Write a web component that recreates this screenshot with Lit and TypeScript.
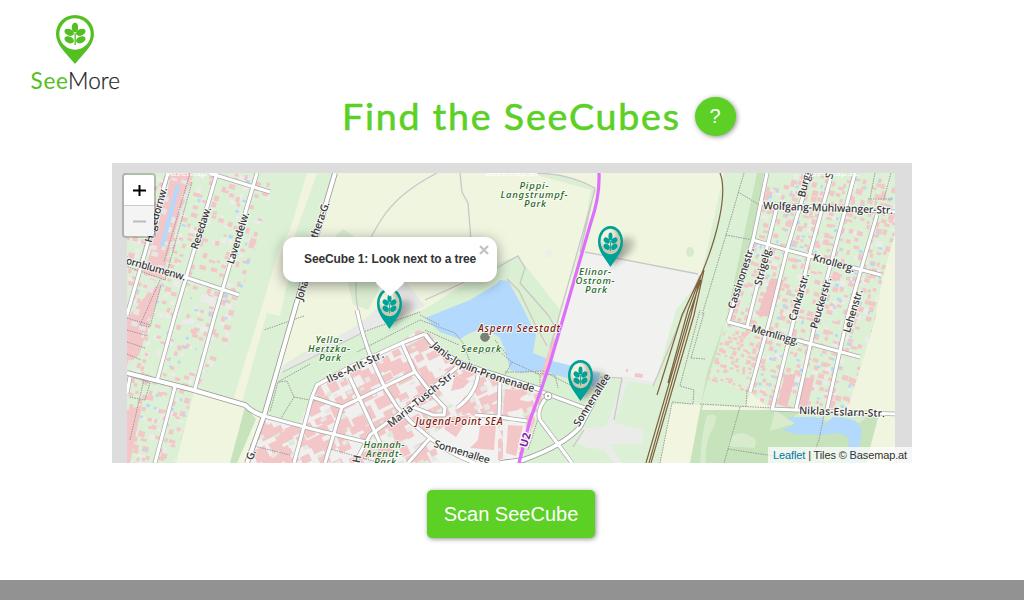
import { LitElement, html, svg, css } from "lit";
import { customElement } from "lit/decorators.js";

const PIN = "M19 0C8 0 0 8.300 0 19C0 30 10 38 19 49C28 38 38 30 38 19C38 8.300 30 0 19 0Z";

const leaves = (color: string) => svg`
  <g fill=${color}>
    <ellipse cx="19" cy="12.500" rx="3.100" ry="4.800"/>
    <ellipse cx="13.200" cy="17.300" rx="5" ry="3.300" transform="rotate(24 13.200 17.300)"/>
    <ellipse cx="24.800" cy="17.300" rx="5" ry="3.300" transform="rotate(-24 24.800 17.300)"/>
    <ellipse cx="13.200" cy="24.800" rx="5" ry="3.300" transform="rotate(24 13.200 24.800)"/>
    <ellipse cx="24.800" cy="24.800" rx="5" ry="3.300" transform="rotate(-24 24.800 24.800)"/>
    <rect x="18.500" y="18" width="1.300" height="12"/>
  </g>`;

/* Small deterministic generator so that the building pattern is stable. */
function random(seed: number) {
  let s = seed;
  return () => {
    s = (s * 1664525 + 1013904223) % 4294967296;
    return s / 4294967296;
  };
}

function scatter(seed: number, box: number[], angle: number, step: number, size: number, density: number) {
  const r = random(seed);
  const [x0, y0, x1, y1] = box;
  const a = (angle * Math.PI) / 180;
  const c = Math.cos(a), s = Math.sin(a);
  const cx = (x0 + x1) / 2, cy = (y0 + y1) / 2;
  const reach = Math.hypot(x1 - x0, y1 - y0) / 2;
  let d = "";
  for (let u = -reach; u < reach; u += step) {
    for (let v = -reach; v < reach; v += step) {
      const keep = r() < density;
      const uu = u + (r() - 0.5) * step * 0.7, vv = v + (r() - 0.5) * step * 0.7;
      const w = size * (0.6 + r() * 0.8), h = size * (0.5 + r() * 0.7);
      const x = cx + uu * c - vv * s, y = cy + uu * s + vv * c;
      if (!keep || x < x0 || x > x1 || y < y0 || y > y1) continue;
      d += `M${x.toFixed(1)} ${y.toFixed(1)}l${(w * c).toFixed(1)} ${(w * s).toFixed(1)} ${(-h * s).toFixed(1)} ${(h * c).toFixed(1)} ${(-w * c).toFixed(1)} ${(-w * s).toFixed(1)}z`;
    }
  }
  return d;
}

const WEST = "127,173 272,173 271,193 256,250 239,297 226,347 194,392 186,420 175,463 127,463 127,173";
const EAST = "768,173 895,173 895,233 882,280 875,320 848,408 771,409 750,393 708,380 728,322 753,240";
const CITY = "263,418 312,430 300,422 317,384 358,370 418,330 430,334 457,366 545,392 520,463 250,463";

const ROADS = [
  "M168 173L127 315", "M217 173L175 315 157 381", "M175 387L155 463", "M257 173L215 315 194 392",
  "M209 173L270 192", "M127 260L185 277 239 295", "M130 377L127 393",
  "M357 310Q362 335 372 360L385 388 397 407 412 423 430 438Q450 454 475 463",
  "M425 334L402 343 350 367 317 385 312 397 294 463", "M312 397L342 407 325 463", "M342 407L415 372 402 343",
  "M415 372L432 394 445 408 444 415 433 415 413 407", "M457 367L421 398 370 435 355 463", "M350 378L380 443",
  "M264 416L312 429 370 443", "M430 438L408 463", "M457 408Q476 394 478 375", "M500 380L499 417 475 415",
  "M499 417L527 421", "M542 392L585 408", "M547 397Q536 410 540 420L572 463",
  "M767 173L753 240 728 322", "M778 203L768 243 747 327", "M810 173L787 250 771 315 750 392",
  "M832 173L810 253 795 315 772 410", "M855 173L830 267 817 315 796 409", "M877 215L860 273 848 315 827 409",
  "M759 203L895 212", "M753 240L787 250 881 275", "M728 322L800 341 860 357", "M771 409L820 411 895 414",
];
const MAIN = [
  "M335 173L296 305 264 416 247 463", "M127 373L190 389 245 405Q253 413 264 416",
  "M425 334Q435 351 465 365L542 390", "M607 375L580 427Q563 446 523 460L500 463",
];
const PATHS = [
  "M166 173L140 262", "M190 173L164 262", "M192 182L165 280 120 264", "M160 280L140 325 150 327 161 285",
  "M127 318L150 325M127 330L148 336M127 342L145 348M127 354L141 360", "M145 375L130 440M133 377L150 383 145 400 129 397",
  "M304 316L264 330M310 364L278 382 270 412M279 382L287 381 294 397 280 420M294 397L315 401",
  "M360 333L420 312M357 352L420 320 455 333 463 343 470 362", "M420 315L440 325M425 330L459 345M462 345Q470 355 500 352",
  "M500 352L512 362 502 380M512 362L540 375 540 390M505 372L523 372 543 371 570 385 590 388",
  "M495 340L507 355M535 373L555 375 558 388", "M545 397L528 450M535 405L520 455",
  "M744 173L726 235 702 315M738 192L758 204M726 235L753 240",
  "M704 313L691 358M691 358L705 359M672 402L693 404 694 390 680 386 700 310M672 403L660 463",
  "M700 404L772 408M747 390L746 407M740 407L724 463M728 449L800 460M824 415L819 440 810 463",
  "M870 199L875 173M884 199L891 173M868 199L893 199", "M327 448L380 463M250 445L290 455",
];

type Label = [string, number, number, number, number];
const STREETS: Label[] = [
  ["Hagedornw.", 156, 215, -74, 57], ["Resedaw.", 201, 228, -72, 44], ["Lavendelw.", 238, 238, -73, 54],
  ["Kornblumenw.", 153, 268, 16, 68], ["Johan", 303, 287, -72, 27], ["thera-G.", 320, 220, -70, 38], ["G.", 251, 455, -72, 10],
  ["Ilse-Arlt-Str.", 355, 367, -25, 62], ["Maria-Tusch-Str.", 421, 399, -39, 83], ["Sonnenallee", 462, 452, 17, 58],
  ["Sonnenallee", 592, 400, -58, 60], ["Wolfgang-Mühlwanger-Str.", 828, 208, 2, 130], ["Knollerg.", 834, 263, 16, 43],
  ["Cassinonestr.", 741, 278, -72, 64], ["Strigelg.", 763, 266, -75, 40], ["Burgg.", 805, 182, -76, 31], ["Str.", 831, 170, -75, 18],
  ["Cankarstr.", 799, 297, -74, 49], ["Peuckerstr.", 821, 303, -74, 53], ["Lehenstr.", 853, 311, -73, 45],
  ["Memlingg.", 775, 335, 16, 49], ["Niklas-Eslarn-Str.", 842, 412, 2, 86], ["H", 357, 459, -78, 7],
];
const PARKS: Label[] = [
  ["Pippi-", 534, 185, 0, 29], ["Langstrumpf-", 534, 194, 0, 67], ["Park", 535, 203, 0, 22],
  ["Elinor-", 595, 271, 0, 32], ["Ostrom-", 595, 280, 0, 39], ["Park", 596, 289, 0, 22],
  ["Yella-", 329, 339, 0, 27], ["Hertzka-", 329, 348, 0, 42], ["Park", 330, 357, 0, 22],
  ["Hannah-", 384, 444, 0, 41], ["Arendt-", 384, 453, 0, 36], ["Park", 385, 461, 0, 22], ["Seepark", 481, 348, 0, 40],
];
const PLACES: Label[] = [["Aspern Seestadt", 519, 328, 0, 82], ["Jugend-Point SEA", 459, 421, 0, 87]];

const label = (cls: string) => ([text, x, y, angle, length]: Label) => svg`
  <text class=${cls} text-anchor="middle" dy="3.500" textLength=${length}
    transform="translate(${x} ${y}) rotate(${angle})">${text}</text>`;

@customElement("map-marker")
export class MapMarker extends LitElement {
  static styles = css`
    :host { display: block; width: 25px; height: 41px; }
    svg { display: block; overflow: visible; }
  `;
  render() {
    return html`<svg width="25" height="41" viewBox="0 0 38 49" preserveAspectRatio="none">
      <defs>
        <filter id="soft" x="-50%" y="-50%" width="200%" height="200%"><feGaussianBlur stdDeviation="3.500"/></filter>
        <linearGradient id="fade" x1="0" x2="1"><stop offset="0" stop-color="#333" stop-opacity=".6"/><stop offset="1" stop-color="#333" stop-opacity=".12"/></linearGradient>
        <radialGradient id="face" cx=".35" cy=".3"><stop offset=".5" stop-color="#f3f3df"/><stop offset="1" stop-color="#c9c8b3"/></radialGradient>
      </defs>
      <path d="M20 47L28 21Q42 9 58 17Q60 28 40 37Z" fill="url(#fade)" filter="url(#soft)"/>
      <path d=${PIN} fill="#00a197"/>
      <circle cx="19" cy="18.500" r="15.300" fill="url(#face)"/>
      ${leaves("#00a197")}
    </svg>`;
  }
}

@customElement("base-map")
export class BaseMap extends LitElement {
  static styles = css`
    :host { display: block; }
    svg { display: block; }
    .case { fill: none; stroke: #aaa; stroke-width: 4.600; }
    .road { fill: none; stroke: #fff; stroke-width: 3.200; }
    .case-main { fill: none; stroke: #999; stroke-width: 5.600; }
    .road-main { fill: none; stroke: #fff; stroke-width: 4; }
    .path { fill: none; stroke: #999; stroke-width: 1; stroke-dasharray: 1.500 1; }
    .track { fill: none; stroke: #c8c8c8; stroke-width: 1.300; }
    .rail { fill: none; stroke: #80603f; stroke-width: 1.200; }
    text { paint-order: stroke; stroke-linejoin: round; font-family: "Noto Sans", "Open Sans", sans-serif; }
    .street { font-family: "Open Sans", "Noto Sans", sans-serif; font-stretch: 90%; font-size: 10.500px; font-weight: 600; fill: #3b3b3b; stroke: #fff; stroke-opacity: .75; stroke-width: 2px; }
    .park { font-size: 9.500px; font-style: italic; font-weight: 500; fill: #1f681f; stroke: #fff; stroke-opacity: .7; stroke-width: 2px; }
    .place { font-size: 10px; font-style: italic; font-weight: 500; fill: #7b1c10; stroke: #fff; stroke-opacity: .8; stroke-width: 2px; }
    .metro { font-size: 11px; font-weight: 700; fill: #8320a5; stroke: #fff; stroke-width: 2.500px; }
    .credit { font-family: "DejaVu Sans", sans-serif; font-size: 9px; fill: #fff; }
  `;
  render() {
    return html`<svg width="800" height="300" viewBox="112 163 800 300">
      <defs>
        <clipPath id="tiles"><rect x="127" y="173" width="768" height="290"/></clipPath>
        <clipPath id="west"><polygon points=${WEST}/></clipPath>
        <clipPath id="east"><polygon points=${EAST}/></clipPath>
        <clipPath id="city"><polygon points=${CITY}/></clipPath>
        <clipPath id="creekside"><polygon points="170,173 194,173 163,278 127,390 127,325 140,278"/></clipPath>
        <clipPath id="allotments"><polygon points="724,331 762,343 749,390 708,377"/></clipPath>
      </defs>
      <g clip-path="url(#tiles)">
        <rect x="127" y="173" width="768" height="290" fill="#f0f5df"/>
        <polygon points="127,173 334,173 264,416 245,407 194,392 176,463 127,463" fill="#dbf0d4"/>
        <polygon points="307,173 317,173 267,313 242,402 233,400 260,313 279,250 290,230" fill="#f1f4df"/>
        <polygon points="278,252 294,252 280,316 262,312" fill="#f1f4df"/>
        <polygon points="245,407 256,419 237,463 230,463" fill="#c7e3bb"/>
        <polygon points="336,235 343,229 372,249 379,290 368,310 353,304" fill="#dbecd1"/>
        <polygon points="283,366 302,353 425,309 500,262 518,256 560,310 553,361 612,374 590,425 555,463 250,463 264,416" fill="#daf0d3"/>
        <polygon points="283,366 358,325 385,302 395,288 407,283 425,306 370,330 285,370" fill="#e8e8e6"/>
        <path d="M537 173Q570 174 595 188L582 250 557 315 547 347 533 353 525 320 515 305 508 264 555 325 580 250 591 190 540 176Z" fill="#dcefd2"/>
        <path d="M425 318L440 312 470 300 495 285 500 280 508 281 515 293 525 312 536 335 533 353 553 361 600 373 597 388 570 379 543 371 520 373 510 370 505 350 500 338 485 328 470 333 460 339 440 332Z" fill="#b3d9fc"/>
        <polygon points="585,252 700,274 682,315 672,350 660,355 661,362 657,378 653,383 607,374 553,361 565,315" fill="#f1f1f0"/>
        <path d="M607 173H722V190Q721 215 702 272L585 251Z" fill="#eff5df"/>
        <path d="M724 173H770L755 240 730 315 705 390 695 463H555L607 378 655 384 676 310 700 280Z" fill="#dbf0d4"/>
        <path d="M624 376L655 382 652 385 628 381 614 423 643 430V444H610L622 463H614L603 449 574 447 583 428 606 427 618 395Z" fill="#ebecea"/>
        <path d="M570 443Q590 443 598 463H552Z" fill="#daf0d3"/>
        <polygon points="671,404 705,405 695,463 660,463" fill="#f2f5df"/>
        <path d="M757 173H764L753 240 725 320 702 410 775 410 869 416 878 418 866 463H690L707 373 727 315Z" fill="#c7e3bb"/>
        <path d="M728 323L750 393 745 407 701 405 708 378Z" fill="#daf0d3"/>
        <path d="M707 416Q722 410 712 430Q704 446 706 463H700Q702 430 707 416M732 436Q742 430 750 436Q759 440 754 448L727 446ZM775 410L790 420 800 412 868 416 860 423 810 419 770 431Z" fill="#d8eccd"/>
        <polygon points=${EAST} fill="#dbf0d4"/>
        <path d="M783 430L795 424 787 418Q800 416 823 418L824 425 833 417Q850 417 857 422L862 430 857 463H847L849 438 840 433 820 435 795 434Z" fill="#b3d9fc"/>
        <polygon points=${CITY} fill="#f0f0ef"/>
        <ellipse cx="690" cy="252" rx="4" ry="5" fill="#d5ebc9"/>
        <circle cx="549" cy="254" r="4" fill="#eeefe9"/>

        <g clip-path="url(#west)">
          <path d=${scatter(5, [127, 173, 275, 463], 16, 8, 5, 0.3)} fill="#ececea"/>
          <path d=${scatter(11, [127, 173, 275, 463], 16, 7, 4.7, 0.44)} fill="#f3c6c8"/>
          <path d=${scatter(21, [127, 173, 275, 463], 16, 13, 3, 0.33)} fill="#b3d9fc"/>
        </g>
        <polygon points="172,173 192,173 162,278 144,275" fill="#f3c6c8"/>
        <polygon points="127,318 151,290 163,282 139,355 127,365" fill="#f3c6c8"/>
        <path d=${scatter(8, [127, 173, 195, 390], 16, 8, 5, 0.5)} clip-path="url(#creekside)" fill="#e6e6e4"/>
        <path d="M127 410L142 405 130 463H127Z" fill="#f3c6c8"/>
        <path d="M178 185L162 246" stroke="#b3d9fc" stroke-width="4"/>
        <rect x="202" y="294" width="15" height="8" fill="#ebebe9" transform="rotate(15 202 294)"/>

        <g clip-path="url(#east)">
          <path d=${scatter(15, [700, 173, 895, 412], 16, 8, 5, 0.3)} fill="#ececea"/>
          <path d=${scatter(31, [700, 173, 895, 412], 16, 6.5, 4.6, 0.62)} fill="#f3c6c8"/>
          <path d=${scatter(41, [700, 173, 895, 412], 16, 12, 3, 0.38)} fill="#b3d9fc"/>
          <path d="M771 278L784 280 772 317 757 315ZM785 375L796 374 787 407 777 404ZM803 377L814 379 807 407 795 405Z" fill="#f0c2c4"/>
        </g>
        <g clip-path="url(#allotments)">
          <rect x="705" y="330" width="60" height="63" fill="#dbf0d4"/>
          <path d=${scatter(51, [700, 325, 765, 392], 16, 5, 3.700, 0.75)} fill="#f3c6c8"/>
        </g>

        <g clip-path="url(#city)">
          <path d=${scatter(61, [245, 320, 550, 463], -26, 13, 12, 0.9)} fill="#f3c6c8"/>
          <path d=${scatter(71, [245, 320, 550, 463], -26, 12, 5, 0.35)} fill="#e7e7e4"/>
          <path d=${scatter(81, [245, 320, 550, 463], -26, 17, 5, 0.4)} fill="#dcebd3"/>
          <path d="M446 371L475 383 473 391 453 406 436 386ZM460 415L498 417 498 463H440L432 435ZM503 420L526 423 516 463 503 463Z" fill="#f2f2f1"/>
          <path d="M455 375L470 381 463 388 451 391ZM450 417L470 415 456 437 444 429ZM480 426L496 424 494 450 470 448 478 440ZM505 389L523 390 520 400 530 402 518 410 503 413Z" fill="#f3c6c8"/>
        </g>
        <polygon points="508,425 523,426 516,456 506,453" fill="#f3c6c8"/>
        <path d="M553 338L557 340 544 377 540 376Z" fill="#f3c6c8"/>
        <rect x="635" y="373" width="8" height="4" fill="#f3c6c8" transform="rotate(8 635 373)"/>
        <rect x="626" y="369" width="2" height="3" fill="#f3c6c8"/>

        <path class="track" d="M437 173Q398 193 381 220T358 270Q353 292 360 318M460 173L462 192 468 203 471 240M425 300L500 266 518 256 525 268 520 283 548 315 554 325M537 173Q570 174 595 188L580 252M585 252L698 274M595 190L550 348M283 372L360 334"/>
        <path class="track" d="M600 377L622 378 614 420M653 386L700 275M507 279L519 291 535 324 547 346M573 447L584 430"/>
        ${PATHS.map((d) => svg`<path class="path" d=${d}/>`)}
        ${MAIN.map((d) => svg`<path class="case-main" d=${d}/>`)}
        ${ROADS.map((d) => svg`<path class="case" d=${d}/>`)}
        ${ROADS.map((d) => svg`<path class="road" d=${d}/>`)}
        ${MAIN.map((d) => svg`<path class="road-main" d=${d}/>`)}
        <circle cx="548" cy="396" r="4" fill="#fff" stroke="#aaa"/><circle cx="548" cy="396" r="1.200" fill="#aaa"/>

        <path class="rail" d="M720 173Q726 188 719 220Q714 244 702 273L682 315 657 395M702 273L688 310 668 383M701 275L691 315 649 463M704 270L694 315 651 463M701 280L689 315 646 463"/>
        <path d="M599 173Q600 196 591 222L565 312 550 363 540 393 530 420 519 463" fill="none" stroke="#dd70fb" stroke-width="3.200"/>
        <circle cx="485" cy="337" r="4.300" fill="#7b8179" stroke="#77806f"/>

        ${STREETS.map(label("street"))}
        <path id="janis" d="M431 346Q444 360 467 370T540 394" fill="none"/>
        <text class="street"><textPath href="#janis" textLength="114">Janis-Joplin-Promenade</textPath></text>
        ${PARKS.map(label("park"))}
        ${PLACES.map(label("place"))}
        <text class="metro" text-anchor="middle" dy="4" transform="translate(525 440) rotate(-74)">U2</text>
        <text class="credit" x="165" y="176">basemap.at</text>
        <text class="credit" x="485" y="176">basemap.at</text>
        <text class="credit" x="805" y="176">basemap.at</text>
      </g>
    </svg>`;
  }
}

@customElement("app-root")
export class AppRoot extends LitElement {
  static styles = css`
    * { box-sizing: border-box; }
    :host { display: flex; flex-direction: column; height: 600px; background: #fff; overflow: hidden; font-family: "Liberation Sans", Arial, sans-serif; }
    header { height: 95px; padding: 15px 0 0 30px; }
    .logo { display: flex; flex-direction: column; width: 90px; align-items: center; }
    .logo svg { display: block; overflow: visible; }
    .name { font-family: Lato, sans-serif; }
    .see { font-size: 22.500px; font-weight: 400; fill: #53c022; }
    .more { font-size: 22.500px; font-weight: 300; fill: #222; stroke: #222; stroke-width: .25px; }
    .heading { display: flex; justify-content: center; align-items: flex-start; gap: 16px; height: 68px; padding: 2px 0 0 54px; }
    h1 { margin: 0; width: 336px; font: 400 37px/40px Lato, sans-serif; }
    h1 svg { display: block; overflow: visible; }
    .title { font: 400 37.500px Lato, sans-serif; fill: #5cd025; stroke: #5cd025; stroke-width: .65px; stroke-linejoin: round; }
    button { border: 0; padding: 0; color: #fff; background: #5cd025; font: 20px "Liberation Sans", Arial, sans-serif; box-shadow: 1px 1px 5px rgba(0, 0, 0, .45); }
    .help { width: 41px; height: 39px; border-radius: 50%; }
    .map { position: relative; align-self: center; width: 800px; height: 300px; background: #ddd; overflow: hidden; }
    .pin { position: absolute; }
    .pin-tree { left: 265px; top: 125px; }
    .pin-park { left: 486px; top: 63px; }
    .pin-lake { left: 456px; top: 197px; }
    .zoom { position: absolute; left: 10px; top: 10px; width: 34px; border: 2px solid rgba(0, 0, 0, .2); border-radius: 4px; background-clip: padding-box; overflow: hidden; }
    .zoom span { display: flex; align-items: center; justify-content: center; height: 30px; background: #fff; }
    .zoom .in { height: 31px; border-bottom: 1px solid #ccc; }
    .zoom .out { background: #f4f4f4; }
    .popup { position: absolute; left: 171px; top: 74px; width: 214px; height: 45px; padding: 14px 20px 0 21px; border-radius: 12px; background: #fff; color: #333; box-shadow: 0 3px 14px rgba(0, 0, 0, .4); font: bold 12px/17px "Liberation Sans", Arial, sans-serif; letter-spacing: -.11px; white-space: nowrap; }
    .tip { position: absolute; left: 97px; top: 36px; width: 20px; height: 20px; background: #fff; transform: scaleY(.95) rotate(45deg); }
    .close { position: absolute; right: 8px; top: 8px; width: 10px; height: 10px; }
    .message { position: relative; }
    .attribution { position: absolute; right: 0; bottom: 0; height: 16px; padding: 0 5px; background: rgba(255, 255, 255, .72); color: #333; font-size: 11px; line-height: 17px; letter-spacing: -.13px; white-space: nowrap; }
    .attribution a { color: #0078a8; }
    .action { display: flex; justify-content: center; height: 117px; padding: 27px 2px 0 0; }
    .scan { width: 168px; height: 48px; border-radius: 5px; }
    footer { height: 20px; background: #929292; }
  `;
  render() {
    return html`
      <header>
        <div class="logo">
          <svg width="38" height="49" viewBox="0 0 38 49">
            <path d=${PIN} fill="#53c022"/><circle cx="19" cy="19" r="15.700" fill="#fff"/>${leaves("#53c022")}
          </svg>
          <svg width="90" height="28" viewBox="0 0 90 28">
            <text class="name see" x="0.500" y="25" textLength="37.500">See</text>
            <text class="name more" x="38" y="25" textLength="52">More</text>
          </svg>
        </div>
      </header>
      <div class="heading">
        <h1><svg width="336" height="40"><text class="title" x="-1" y="33" textLength="337">Find the SeeCubes</text></svg></h1>
        <button class="help">?</button>
      </div>
      <div class="map">
        <base-map></base-map>
        <map-marker class="pin pin-tree"></map-marker>
        <map-marker class="pin pin-park"></map-marker>
        <map-marker class="pin pin-lake"></map-marker>
        <div class="popup">
          <div class="tip"></div>
          <span class="message">SeeCube 1: Look next to a tree</span>
          <svg class="close" viewBox="0 0 10 10"><path d="M1 1l8 8M9 1L1 9" stroke="#c3c3c3" stroke-width="2.300"/></svg>
        </div>
        <div class="zoom">
          <span class="in"><svg width="13" height="13"><path d="M0 6.500H13M6.500 1V12" stroke="#000" stroke-width="2"/></svg></span>
          <span class="out"><svg width="13" height="13"><path d="M0 6.500H13" stroke="#bbb" stroke-width="2"/></svg></span>
        </div>
        <div class="attribution"><a>Leaflet</a> | Tiles © Basemap.at</div>
      </div>
      <div class="action"><button class="scan">Scan SeeCube</button></div>
      <footer></footer>
    `;
  }
}
